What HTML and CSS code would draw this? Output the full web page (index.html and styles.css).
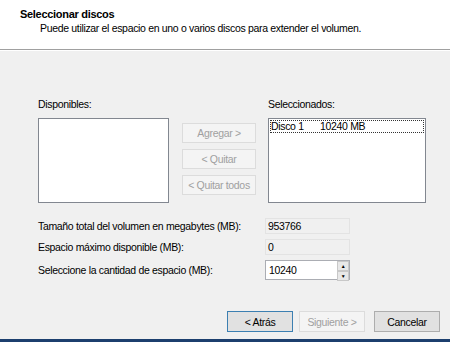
FILE: index.html
```html
<!DOCTYPE html>
<html lang="es">
  <head>
    <meta charset="UTF-8" />
    <title>Extender volumen</title>
    <link rel="stylesheet" href="styles.css">
  </head>
  <body>
    <div class="wizard">
      <div class="header">
        <div class="title">Seleccionar discos</div>
        <div class="subtitle">Puede utilizar el espacio en uno o varios discos para extender el volumen.</div>
      </div>

      <div class="content">
        <div class="lists">
          <div class="list-col">
            <div class="list-label">Disponibles:</div>
            <div class="listbox left-box"></div>
          </div>

          <div class="move-buttons">
            <button class="btn" disabled>Agregar &gt;</button>
            <button class="btn" disabled>&lt; Quitar</button>
            <button class="btn" disabled>&lt; Quitar todos</button>
          </div>

          <div class="list-col">
            <div class="list-label">Seleccionados:</div>
            <div class="listbox right-box">
              <div class="list-item"><span class="disk">Disco 1</span><span>10240 MB</span></div>
            </div>
          </div>
        </div>

        <div class="fields">
          <div class="field-label">Tamaño total del volumen en megabytes (MB):</div>
          <div class="readonly">953766</div>

          <div class="field-label">Espacio máximo disponible (MB):</div>
          <div class="readonly">0</div>

          <div class="field-label">Seleccione la cantidad de espacio (MB):</div>
          <div class="spinner">
            <span class="spin-value">10240</span>
            <span class="spin-buttons">
              <span class="spin-btn">&#9650;</span>
              <span class="spin-btn">&#9660;</span>
            </span>
          </div>
        </div>
      </div>

      <div class="footer">
        <button class="btn nav focused">&lt; Atrás</button>
        <button class="btn nav" disabled>Siguiente &gt;</button>
        <button class="btn nav cancel">Cancelar</button>
      </div>
    </div>
  </body>
</html>
```

FILE: styles.css
```css
body {
  margin: 0;
  font-family: "Liberation Sans", Arial, sans-serif;
  font-size: 10.5px;
  letter-spacing: -0.33px;
  color: #000;
  background-color: #f0f0f0;
}

.wizard {
  width: 450px;
  height: 342px;
  display: flex;
  flex-direction: column;
  overflow: hidden;
}

.header {
  height: 50px;
  box-sizing: border-box;
  padding: 8px 20px 0;
  background-color: #fff;
  border-bottom: 1px solid #a0a0a0;
  box-shadow: 0 1px 0 #fff;
}

.title {
  font-weight: bold;
  font-size: 11px;
  letter-spacing: -0.3px;
  line-height: 13px;
}

.subtitle {
  padding-left: 20px;
  line-height: 14px;
}

.content {
  flex: 1;
  padding: 48px 0 0 38px;
}

.lists {
  display: flex;
  align-items: flex-start;
}

.list-label {
  line-height: 13px;
  margin-bottom: 7px;
}

.listbox {
  height: 85px;
  box-sizing: border-box;
  background-color: #fff;
  border: 1px solid #828790;
}

.left-box {
  width: 131px;
}

.right-box {
  width: 158px;
  padding: 1px;
}

.list-item {
  display: flex;
  line-height: 13px;
  outline: 1px dotted #333;
  outline-offset: -1px;
  padding-left: 1px;
}

.disk {
  width: 49px;
}

.move-buttons {
  width: 74px;
  display: flex;
  flex-direction: column;
  gap: 6px;
  margin: 25px 12px 0 13px;
}

.btn {
  font-family: inherit;
  font-size: 10.5px;
  letter-spacing: -0.33px;
  height: 20px;
  padding: 0;
  background-color: #e1e1e1;
  border: 1px solid #adadad;
  color: #000;
}

.btn:disabled {
  background-color: #f4f4f4;
  border-color: #dcdcdc;
  color: #a0a0a0;
}

.fields {
  display: grid;
  grid-template-columns: 227px 85px;
  row-gap: 5px;
  margin-top: 15px;
  align-items: center;
}

.readonly {
  height: 16px;
  box-sizing: border-box;
  line-height: 14px;
  padding-left: 2px;
  background-color: #f0f0f0;
  border: 1px solid #e3e3e3;
}

.spinner {
  height: 20px;
  box-sizing: border-box;
  display: flex;
  align-items: center;
  background-color: #fff;
  border: 1px solid #abadb3;
  padding-left: 3px;
}

.spin-value {
  flex: 1;
}

.spin-buttons {
  width: 12px;
  height: 18px;
  display: flex;
  flex-direction: column;
}

.spin-btn {
  flex: 1;
  font-size: 5px;
  line-height: 8px;
  text-align: center;
  background-color: #e8e8e8;
  border: 1px solid #c8c8c8;
}

.footer {
  display: flex;
  justify-content: flex-end;
  gap: 6px;
  padding: 0 10px 7px 0;
  border-bottom: 3px solid #1c3f6e;
}

.nav {
  width: 66px;
  height: 21px;
}

.cancel {
  margin-left: 3px;
}

.focused {
  border-color: #3c7fb1;
}
```
